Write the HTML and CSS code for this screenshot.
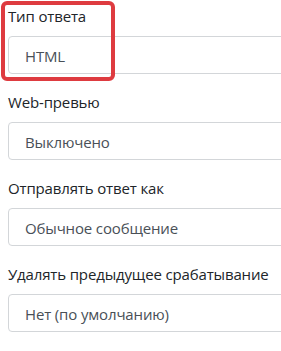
FILE: index.html
```html
<!DOCTYPE html>
<html lang="ru">
<head>
<meta charset="utf-8">
<link rel="stylesheet" href="styles.css">
</head>
<body>
<div class="form">
  <div class="group">
    <label class="label">Тип ответа</label>
    <div class="control">HTML</div>
  </div>
  <div class="group">
    <label class="label">Web-превью</label>
    <div class="control">Выключено</div>
  </div>
  <div class="group">
    <label class="label">Отправлять ответ как</label>
    <div class="control">Обычное сообщение</div>
  </div>
  <div class="group">
    <label class="label">Удалять предыдущее срабатывание</label>
    <div class="control">Нет (по умолчанию)</div>
  </div>
  <div class="highlight"></div>
</div>
</body>
</html>
```
FILE: styles.css
```css
html, body {
  margin: 0;
  padding: 0;
  background: #fff;
}
body {
  font-family: "Open Sans", "Noto Sans", sans-serif;
  font-size: 15px;
  letter-spacing: -0.15px;
  color: #212529;
}
.form {
  position: relative;
  width: 281px;
  height: 351px;
  box-sizing: border-box;
  overflow: hidden;
  padding: 4px 0 0 8px;
  display: flex;
  flex-direction: column;
  gap: 16px;
}
.group {
  display: flex;
  flex-direction: column;
  gap: 8px;
}
.label {
  line-height: 24px;
  display: block;
}
.control {
  box-sizing: border-box;
  height: 38px;
  margin-right: -12px;
  border: 1px solid #d3d6d9;
  border-radius: 4px;
  padding: 2px 16px 0;
  line-height: 34px;
  color: #495057;
}
.highlight {
  position: absolute;
  left: 1px;
  top: 1px;
  width: 114px;
  height: 80px;
  box-sizing: border-box;
  border: 4px solid #de3b40;
  border-radius: 6px;
}
```
